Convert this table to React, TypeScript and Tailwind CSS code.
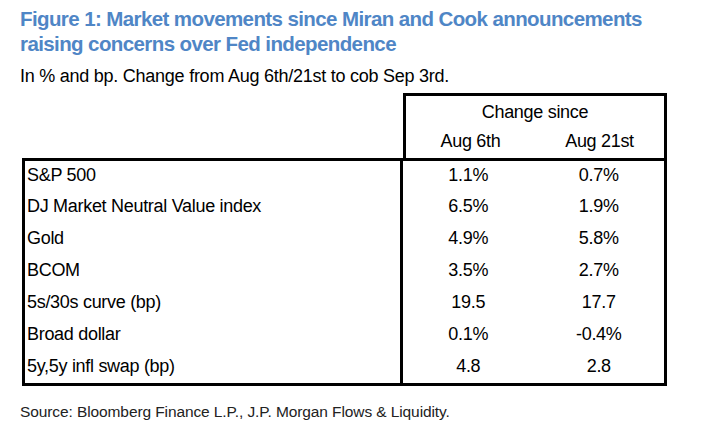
import React from "react";

const rows: [string, string, string][] = [
  ["S&P 500", "1.1%", "0.7%"],
  ["DJ Market Neutral Value index", "6.5%", "1.9%"],
  ["Gold", "4.9%", "5.8%"],
  ["BCOM", "3.5%", "2.7%"],
  ["5s/30s curve (bp)", "19.5", "17.7"],
  ["Broad dollar", "0.1%", "-0.4%"],
  ["5y,5y infl swap (bp)", "4.8", "2.8"],
];

export default function App() {
  return (
    <div className="w-[704px] h-[431px] bg-white text-black font-['Liberation_Sans','Arial',sans-serif] overflow-hidden">
      <div className="pl-[20px] pt-[6px]">
        <div className="text-[#4f86c6] font-bold text-[20.5px] leading-[25px] tracking-[-0.6px] whitespace-nowrap">
          Figure 1: Market movements since Miran and Cook announcements
          <br />
          raising concerns over Fed independence
        </div>
        <div className="text-[18px] leading-[20px] mt-[10px] tracking-[-0.25px] whitespace-nowrap">
          In % and bp. Change from Aug 6th/21st to cob Sep 3rd.
        </div>
      </div>
      <div className="ml-[22px] mt-[7px] w-[645px] text-[18px] tracking-[-0.3px]">
        <div className="flex">
          <div className="w-[381px]" />
          <div className="flex-1 border-t-[3px] border-x-[3px] border-black h-[65px] flex flex-col">
            <div className="h-[31px] flex items-center justify-center pt-[2px]">Change since</div>
            <div className="flex flex-1 pb-[3px]">
              <div className="flex-1 flex items-center justify-center">Aug 6th</div>
              <div className="flex-1 flex items-center justify-center">Aug 21st</div>
            </div>
          </div>
        </div>
        <div className="border-[3px] border-black">
          {rows.map(([label, a, b], i) => (
            <div key={label} className={i === 0 ? "flex h-[30px]" : "flex h-[32px]"}>
              <div className="w-[378px] pl-[2px] pb-[2px] flex items-center border-r-[3px] border-black">{label}</div>
              <div className="flex-1 pb-[2px] flex items-center justify-center">{a}</div>
              <div className="flex-1 pb-[2px] flex items-center justify-center">{b}</div>
            </div>
          ))}
        </div>
      </div>
      <div className="pl-[20px] mt-[17px] text-[15.5px] leading-[18px] tracking-[-0.1px] text-[#222] whitespace-nowrap">
        Source: Bloomberg Finance L.P., J.P. Morgan Flows &amp; Liquidity.
      </div>
    </div>
  );
}
